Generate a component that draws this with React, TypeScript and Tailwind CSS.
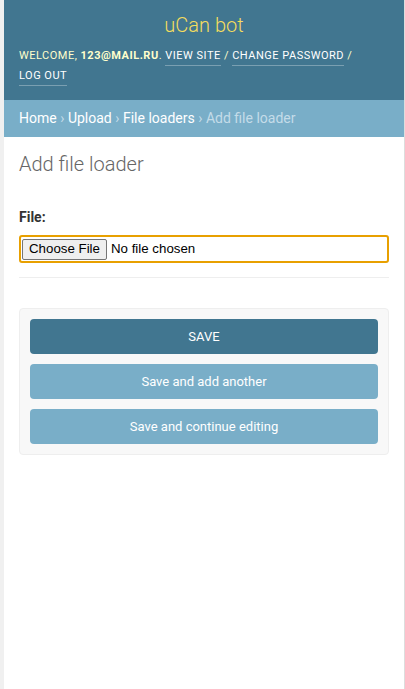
import React from "react";

export default function App() {
  const font = { fontFamily: "Roboto, 'Liberation Sans', sans-serif" };
  const link = "inline-block leading-[16px] text-white border-b border-[rgba(255,255,255,0.3)] pb-[1px]";
  return (
    <div className="flex w-[405px] min-h-[689px] bg-white" style={font}>
      <div className="w-[4px] shrink-0 bg-[#f0f0f0]" />
      <div className="flex-1 flex flex-col bg-white">
        <header className="bg-[#417690] px-[15px] pt-[13px] pb-[14px]">
          <h1 className="text-center text-[20px] leading-[24px] font-light text-[#f5dd5d]">uCan bot</h1>
          <div className="mt-[9px] text-[11px] leading-[20px] tracking-[0.5px] uppercase text-[#ffffcc]">
            Welcome, <strong className="font-bold">123@mail.ru</strong>.{" "}
            <a className={link}>View site</a> / <a className={link}>Change password</a> /{" "}
            <a className={link}>Log out</a>
          </div>
        </header>
        <div className="bg-[#79aec8] px-[15px] h-[37px] flex items-center text-[14px] text-white">
          <span>Home</span>
          <span className="mx-[3.5px] text-[#c4dce8]">›</span>
          <span>Upload</span>
          <span className="mx-[3.5px] text-[#c4dce8]">›</span>
          <span>File loaders</span>
          <span className="mx-[3.5px] text-[#c4dce8]">›</span>
          <span className="text-[#c4dce8]">Add file loader</span>
        </div>
        <main className="px-[15px] pt-[15px]">
          <h1 className="text-[20px] leading-[24px] font-light text-[#666]">Add file loader</h1>
          <div className="mt-[33px] text-[14px] leading-[17px] font-bold text-[#333]">File:</div>
          <div className="mt-[9px] h-[28px] border-2 border-[#e8a000] rounded-[3px] flex items-center pl-[1px]">
            <span
              className="h-[21px] px-[6px] flex items-center bg-[#efefef] border border-[#767676] rounded-[2px] text-[13.3px] text-black"
              style={{ fontFamily: "'Liberation Sans', Arial, sans-serif" }}
            >
              Choose File
            </span>
            <span
              className="ml-[4px] text-[13.3px] text-black"
              style={{ fontFamily: "'Liberation Sans', Arial, sans-serif" }}
            >
              No file chosen
            </span>
          </div>
          <div className="mt-[14px] h-px bg-[#eeeeee]" />
          <div className="mt-[30px] border border-[#eeeeee] bg-[#f8f8f8] rounded-[4px] p-[10px] flex flex-col gap-[10px]">
            <button className="h-[35px] rounded-[4px] bg-[#417690] text-white text-[13px] uppercase">Save</button>
            <button className="h-[35px] rounded-[4px] bg-[#79aec8] text-white text-[13px]">Save and add another</button>
            <button className="h-[35px] rounded-[4px] bg-[#79aec8] text-white text-[13px]">Save and continue editing</button>
          </div>
        </main>
      </div>
      <div className="w-[1px] shrink-0 bg-[#dddddd]" />
    </div>
  );
}
